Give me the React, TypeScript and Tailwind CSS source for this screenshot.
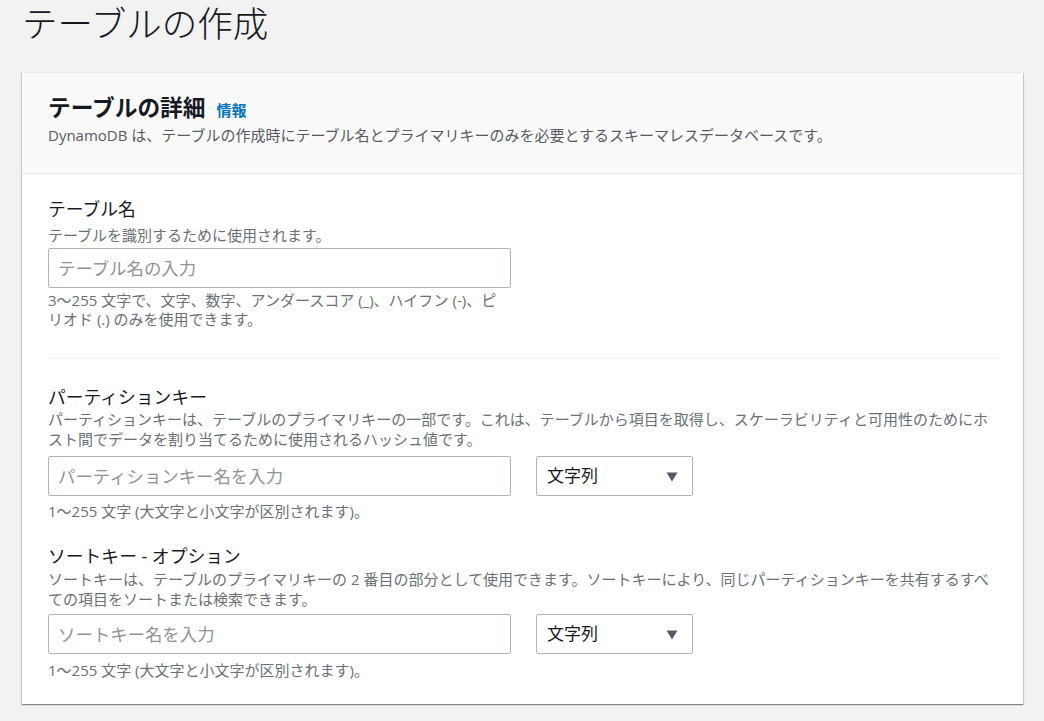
import React from "react";

const FONT = { fontFamily: '"Open Sans", "Noto Sans CJK JP", sans-serif' };

function TextInput({ placeholder }: { placeholder: string }) {
    return (
        <input
            type="text"
            placeholder={placeholder}
            className="h-[40px] w-[463px] rounded-[2px] border border-[#aab7b8] bg-white pl-[9px] text-[17.4px] text-[#16191f] outline-none placeholder:text-[#8d9596]"
            style={FONT}
        />
    );
}

function TypeSelect() {
    return (
        <div className="ml-[25px] flex h-[40px] w-[157px] items-center justify-between rounded-[2px] border border-[#aab7b8] bg-white pl-[10px] pr-[14px]">
            <span className="text-[17px] leading-[24px] text-[#16191f]">文字列</span>
            <svg width="12" height="10" viewBox="0 0 12 10" className="mt-[1px]">
                <path d="M0.5 0.5 H11.5 L6 9.5 Z" fill="#545b64" />
            </svg>
        </div>
    );
}

export default function App() {
    return (
        <div className="min-h-[721px] w-full bg-[#f2f2f2] px-[22px] pb-[17px] pt-[3px]" style={FONT}>
            <h1 className="text-[35.5px] font-light leading-[40px] text-[#16191f]">テーブルの作成</h1>

            <div className="mt-[29px] w-[1001px] border-t border-[#eaeded] bg-white shadow-[0_1px_1px_0_rgba(0,28,36,0.3),1px_1px_1px_0_rgba(0,28,36,0.15),-1px_1px_1px_0_rgba(0,28,36,0.15)]">
                {/* Header */}
                <div className="border-b border-[#eaeded] bg-[#fafafa] pb-[28px] pl-[26px] pr-[24px] pt-[21px]">
                    <div className="flex items-baseline">
                        <h2 className="text-[22.7px] font-bold leading-[28px] text-[#16191f]">テーブルの詳細</h2>
                        <span className="ml-[11px] text-[15px] font-bold text-[#0073bb]">情報</span>
                    </div>
                    <p className="mt-[3px] text-[15px] leading-[20px] text-[#545b64]">
                        DynamoDB は、テーブルの作成時にテーブル名とプライマリキーのみを必要とするスキーマレスデータベースです。
                    </p>
                </div>

                {/* Body */}
                <div className="pb-[24px] pl-[26px] pr-[24px] pt-[24px]">
                    <div className="text-[17.8px] leading-[22px] text-[#16191f]">テーブル名</div>
                    <p className="mt-[5px] text-[15px] leading-[20px] text-[#687078]">テーブルを識別するために使用されます。</p>
                    <div className="mt-[3px]">
                        <TextInput placeholder="テーブル名の入力" />
                    </div>
                    <p className="mt-[3px] w-[470px] text-[15px] leading-[19px] text-[#687078]">
                        3～255 文字で、文字、数字、アンダースコア (_)、ハイフン (-)、ピ
                        <br />
                        リオド (.) のみを使用できます。
                    </p>

                    <div className="mt-[29px] h-px bg-[#eaeded]" />

                    <div className="mt-[27px] text-[17.8px] leading-[22px] text-[#16191f]">パーティションキー</div>
                    <p className="mt-[1px] max-w-[945px] text-[15px] leading-[20px] text-[#687078]">
                        パーティションキーは、テーブルのプライマリキーの一部です。これは、テーブルから項目を取得し、スケーラビリティと可用性のためにホスト間でデータを割り当てるために使用されるハッシュ値です。
                    </p>
                    <div className="mt-[7px] flex">
                        <TextInput placeholder="パーティションキー名を入力" />
                        <TypeSelect />
                    </div>
                    <p className="mt-[5px] text-[15px] leading-[20px] text-[#687078]">1～255 文字 (大文字と小文字が区別されます)。</p>

                    <div className="mt-[24px] text-[17.8px] leading-[22px] text-[#16191f]">ソートキー - オプション</div>
                    <p className="mt-[2px] max-w-[945px] text-[15px] leading-[20px] text-[#687078]">
                        ソートキーは、テーブルのプライマリキーの 2 番目の部分として使用できます。ソートキーにより、同じパーティションキーを共有するすべての項目をソートまたは検索できます。
                    </p>
                    <div className="mt-[5px] flex">
                        <TextInput placeholder="ソートキー名を入力" />
                        <TypeSelect />
                    </div>
                    <p className="mt-[6px] text-[15px] leading-[20px] text-[#687078]">1～255 文字 (大文字と小文字が区別されます)。</p>
                </div>
            </div>
        </div>
    );
}
